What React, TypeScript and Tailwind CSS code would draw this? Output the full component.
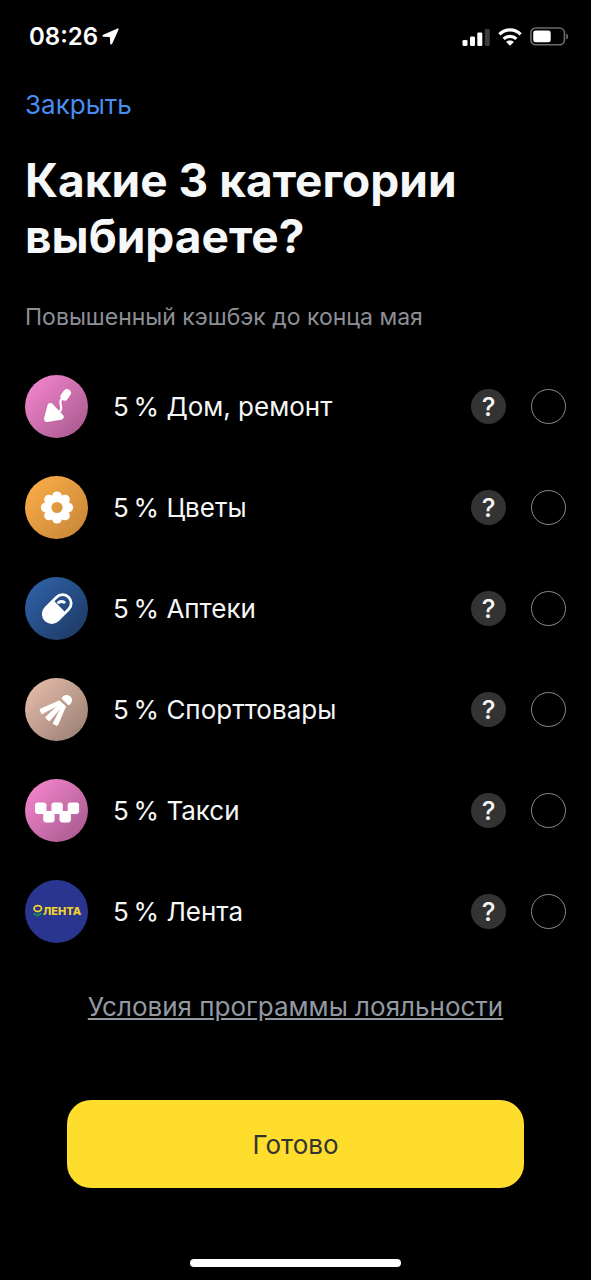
import React, { useState } from 'react';

interface Category {
  id: string;
  name: string;
  background: string;
  icon: React.ReactNode;
}

const TrowelIcon = () => (
  <svg viewBox="0 0 63 63" className="size-full" fill="#fff" stroke="#fff" strokeLinejoin="round" strokeLinecap="round" aria-hidden="true">
    <path d="M25.4 31 L35.6 41.8 L22 44 Z" strokeWidth="6" />
    <path d="M32 37.5 C34.5 37 36.2 35.4 36.2 33 C36.2 30 34.4 27.5 35.8 25 L38.5 22.5" fill="none" strokeWidth="2.2" />
    <path d="M39.4 21.6 L42 18" fill="none" strokeWidth="7.8" />
  </svg>
);

const FlowerIcon = () => (
  <svg viewBox="0 0 63 63" className="size-full" aria-hidden="true">
    <g transform="translate(32 31.5)">
      {[0, 45, 90, 135, 180, 225, 270, 315].map((angle) => (
        <circle key={angle} cy="-11.2" r="4.9" fill="#fff" transform={`rotate(${angle})`} />
      ))}
      <circle r="8.6" fill="none" stroke="#fff" strokeWidth="6" />
    </g>
  </svg>
);

const PillIcon = () => (
  <svg viewBox="0 0 63 63" className="size-full" fill="#fff" aria-hidden="true">
    <g transform="translate(32.2 31.6) rotate(-45)">
      <path
        fillRule="evenodd"
        d="M-7.6 -10 H7.6 A10 10 0 0 1 7.6 10 H-7.6 A10 10 0 0 1 -7.6 -10 Z M3.2 -7.2 V7.2 H7.6 A7.2 7.2 0 0 0 7.6 -7.2 Z"
      />
    </g>
    <path d="M33.6 25.4 Q36.4 23.6 39.2 25.2" fill="none" stroke="#fff" strokeWidth="3" strokeLinecap="round" />
  </svg>
);

const ShuttlecockIcon = () => (
  <svg viewBox="0 0 63 63" className="size-full" fill="#fff" stroke="#fff" strokeLinejoin="round" aria-hidden="true">
    <path d="M37.3 20.2 C38.5 17.8 42.6 16.6 45 19 C47.2 21.2 46.4 25 43.6 26.4 Z" strokeWidth="1.4" />
    <path d="M33.4 24 L15.8 31.8 L17.2 34.8 L34.4 25.6 Z" strokeWidth="2.4" />
    <path d="M35.8 26 L21.6 39.4 L24.2 42 L36.8 27.2 Z" strokeWidth="2.4" />
    <path d="M38 27.8 L29 45.2 L32 46.6 L39.6 28.8 Z" strokeWidth="2.4" />
    <path d="M34 24.2 L39.2 28.6" strokeWidth="3" strokeLinecap="round" />
  </svg>
);

const TaxiIcon = () => (
  <svg viewBox="0 0 63 63" className="size-full" fill="#fff" aria-hidden="true">
    <rect x="10" y="23.5" width="11.4" height="11.4" rx="2.8" />
    <rect x="26.4" y="23.5" width="11.4" height="11.4" rx="2.8" />
    <rect x="42.7" y="23.5" width="11.4" height="11.4" rx="2.8" />
    <rect x="18.2" y="32" width="11.4" height="11.4" rx="2.8" />
    <rect x="34.5" y="32" width="11.4" height="11.4" rx="2.8" />
  </svg>
);

const LentaLogo = () => (
  <svg viewBox="0 0 63 63" className="size-full" aria-hidden="true">
    <ellipse cx="12.8" cy="28.6" rx="3.7" ry="2.9" fill="none" stroke="#f2d32b" strokeWidth="1.8" />
    <path d="M8 33 C10 32.6 12 33.6 12.4 35.2 C13 33.6 15 32.8 17 33.2 C16 35.2 14.2 36 12.6 35.8 L12.8 37.2 L11.8 37.2 L11.8 35.8 C10 35.6 8.6 34.6 8 33 Z" fill="#159a4c" />
    <text x="18" y="35.4" fontSize="11" fontWeight="800" fill="#f2d32b" className="font-[Inter,sans-serif]">ЛЕНТА</text>
  </svg>
);

const categories: Category[] = [
  { id: 'home', name: 'Дом, ремонт', background: 'bg-linear-to-br from-[#fb88d3] to-[#a2588a]', icon: <TrowelIcon /> },
  { id: 'flowers', name: 'Цветы', background: 'bg-linear-to-br from-[#ffae48] to-[#c48537]', icon: <FlowerIcon /> },
  { id: 'pharmacy', name: 'Аптеки', background: 'bg-linear-to-br from-[#3065ad] to-[#1c375f]', icon: <PillIcon /> },
  { id: 'sport', name: 'Спорттовары', background: 'bg-linear-to-br from-[#ecc1af] to-[#957c71]', icon: <ShuttlecockIcon /> },
  { id: 'taxi', name: 'Такси', background: 'bg-linear-to-br from-[#fb88d3] to-[#a2588a]', icon: <TaxiIcon /> },
  { id: 'lenta', name: 'Лента', background: 'bg-[#2a358f]', icon: <LentaLogo /> },
];

function StatusBar() {
  return (
    <div className="flex h-[73px] items-center justify-between pr-[22px] pl-[29px]">
      <div className="flex items-center gap-1 text-2xl font-semibold text-white">
        <span>08:26</span>
        <svg viewBox="0 0 17 17" className="size-[17px]" fill="#fff" aria-hidden="true">
          <path d="M15.6 .6 C16.4 .3 16.9 .9 16.6 1.6 L10.2 15.8 C9.7 16.8 8.3 16.5 8.2 15.4 L7.9 9.6 C7.9 9.2 7.7 9 7.3 9 L1.5 8.7 C.3 8.6 .1 7.3 1.2 6.8 Z" />
        </svg>
      </div>
      <div className="flex items-center gap-2">
        <svg viewBox="0 0 28 18" className="h-[18px] w-7" fill="#fff" aria-hidden="true">
          <rect x=".5" y="12" width="5" height="6" rx="1.3" />
          <rect x="8" y="8.5" width="5" height="9.5" rx="1.3" />
          <rect x="15.3" y="4.5" width="5" height="13.5" rx="1.3" />
          <rect x="22.8" y="1" width="5" height="17" rx="1.3" fill="#3c3c3c" />
        </svg>
        <svg viewBox="0 0 24 18" className="h-[18px] w-6" fill="none" stroke="#fff" strokeWidth="3.2" aria-hidden="true">
          <path d="M1.4 6.4 C7.4 .4 16.6 .4 22.6 6.4" />
          <path d="M5.6 10.9 C9.2 7.4 14.8 7.4 18.4 10.9" />
          <path d="M12 17.8 L8.2 14 C10.4 12.1 13.6 12.1 15.8 14 Z" fill="#fff" stroke="none" />
        </svg>
        <svg viewBox="0 0 39 19" className="h-[19px] w-[39px]" aria-hidden="true">
          <rect x=".9" y="1" width="33.5" height="16.8" rx="4.8" fill="none" stroke="#6b6b6b" strokeWidth="1.6" />
          <rect x="3.2" y="3.5" width="17.5" height="11.8" rx="2.4" fill="#fff" />
          <path d="M36.2 6.4 C38.8 7.4 38.8 11.4 36.2 12.4 Z" fill="#6b6b6b" />
        </svg>
      </div>
    </div>
  );
}

interface CategoryRowProps {
  category: Category;
  checked: boolean;
  onToggle: (id: string) => void;
}

function CategoryRow({ category, checked, onToggle }: CategoryRowProps) {
  return (
    <li className="flex items-center">
      <div className={`size-[63px] shrink-0 overflow-hidden rounded-full ${category.background}`}>
        {category.icon}
      </div>
      <label htmlFor={category.id} className="ml-[25px] flex-1 text-[26px] leading-8">
        5&#8201;% {category.name}
      </label>
      <button
        type="button"
        aria-label={`Подробнее: ${category.name}`}
        className="flex size-[35px] items-center justify-center rounded-full bg-[#333] text-[26px] leading-8 font-medium"
      >
        ?
      </button>
      <input
        id={category.id}
        type="checkbox"
        checked={checked}
        onChange={() => onToggle(category.id)}
        className="ml-[25px] size-[35px] appearance-none rounded-full border border-[#8a8a8d] checked:border-[#ffdd2d] checked:bg-[#ffdd2d]"
      />
    </li>
  );
}

export default function App() {
  const [selected, setSelected] = useState<string[]>([]);

  // No more than three categories can be picked
  const handleToggle = (id: string) => {
    setSelected((prev) => {
      if (prev.includes(id)) {
        return prev.filter((item) => item !== id);
      }
      return prev.length < 3 ? [...prev, id] : prev;
    });
  };

  return (
    <div className="flex min-h-screen flex-col bg-black font-[Inter,'Liberation_Sans',sans-serif] text-[#f6f7f8]">
      <StatusBar />
      <main className="flex flex-col px-[25px] pt-4">
        <button type="button" className="self-start text-[26px] leading-8 text-[#4a8df0]">
          Закрыть
        </button>
        <h1 className="mt-[31px] text-[46px] leading-14 font-bold">Какие 3 категории выбираете?</h1>
        <p className="mt-[37px] text-[23px] leading-8 text-[#8d8f97]">Повышенный кэшбэк до конца мая</p>
        <ul className="mt-[42px] flex flex-col gap-[38px]">
          {categories.map((category) => (
            <CategoryRow
              key={category.id}
              category={category}
              checked={selected.includes(category.id)}
              onToggle={handleToggle}
            />
          ))}
        </ul>
        <a href="#terms" className="mt-12 self-center text-[26px] leading-8 text-[#9299a2] underline">
          Условия программы лояльности
        </a>
        <button
          type="button"
          className="mx-[42px] mt-[77px] h-[88px] rounded-3xl bg-[#ffdd2d] pt-0.5 text-[26px] leading-8 text-[#333]"
        >
          Готово
        </button>
      </main>
      <div className="mx-auto mt-auto mb-[13px] h-2 w-[211px] rounded-full bg-white" />
    </div>
  );
}
